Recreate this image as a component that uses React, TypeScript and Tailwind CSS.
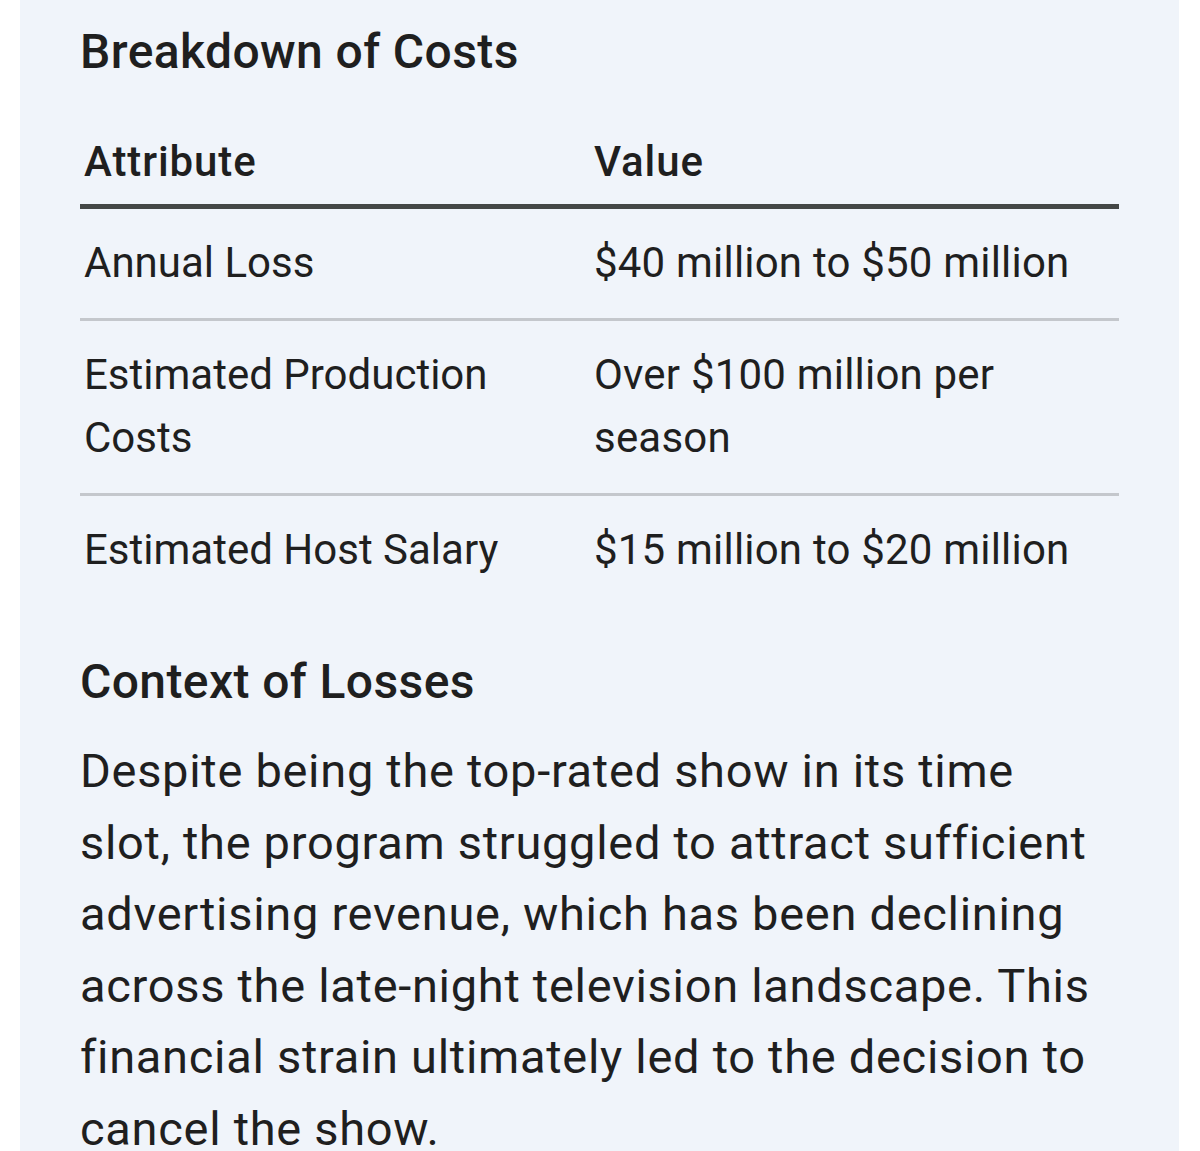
export default function App() {
  const rows: [string, string][] = [
    ["Annual Loss", "$40 million to $50 million"],
    ["Estimated Production Costs", "Over $100 million per season"],
    ["Estimated Host Salary", "$15 million to $20 million"],
  ];
  return (
    <div className="min-h-[1151px] bg-white pl-[20px] pr-[21px] font-[Roboto,sans-serif] text-[#1f1f1f]">
      <div className="min-h-[1151px] bg-[#f0f4fa] pl-[60px] pr-[60px] pt-[22px]">
        <h2 className="text-[48px] leading-[60px] font-medium tracking-[0.4px]">Breakdown of Costs</h2>
        <div className="mt-[48px] w-[1039px]">
          <div className="grid grid-cols-[510px_1fr] border-b-[5px] border-[#444746] pb-[11px]">
            <div className="pl-[4px] text-[42px] leading-[63px] font-medium tracking-[0.9px]">Attribute</div>
            <div className="pl-[4px] text-[42px] leading-[63px] font-medium tracking-[0.9px]">Value</div>
          </div>
          {rows.map(([a, v], i) => (
            <div
              key={a}
              className={
                i < rows.length - 1
                  ? "grid grid-cols-[510px_1fr] pt-[22px] pb-[24px] border-b-[3px] border-[#c4c7cc]"
                  : "grid grid-cols-[510px_1fr] pt-[22px] pb-[24px]"
              }
            >
              <div className="pl-[4px] pr-[20px] text-[42px] leading-[63px]">{a}</div>
              <div className="pl-[4px] pr-[20px] text-[42px] leading-[63px] tracking-[0.2px]">{v}</div>
            </div>
          ))}
        </div>
        <h3 className="mt-[49px] text-[48px] leading-[56px] font-medium tracking-[0.4px]">Context of Losses</h3>
        <p className="mt-[25px] text-[47px] leading-[71.5px] tracking-[0.7px]">
          Despite being the top-rated show in its time
          <br />
          slot, the program struggled to attract sufficient
          <br />
          advertising revenue, which has been declining
          <br />
          across the late-night television landscape. This
          <br />
          financial strain ultimately led to the decision to
          <br />
          cancel the show.
        </p>
      </div>
    </div>
  );
}
